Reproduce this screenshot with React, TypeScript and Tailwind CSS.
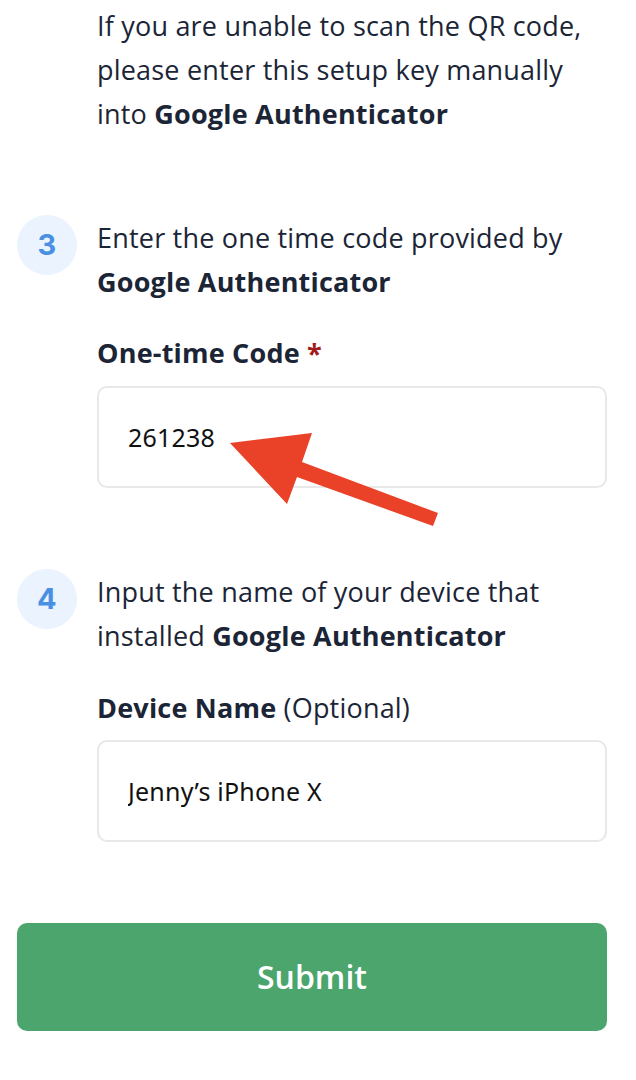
import React from "react";

function StepBadge({ n }: { n?: number }) {
  if (!n) return <div className="w-[60px] shrink-0" />;
  return (
    <div className="w-[60px] h-[60px] shrink-0 rounded-full bg-[#eaf3fe] flex items-center justify-center text-[#4a90e2] text-[29px] font-bold font-['Inter',sans-serif] -mt-px">
      {n}
    </div>
  );
}

function Field({ value }: { value: string }) {
  return (
    <input
      readOnly
      defaultValue={value}
      className="w-full h-[102px] rounded-[10px] border-2 border-[#e8e8e8] bg-white pl-[29px] text-[25px] text-[#111] font-['Noto_Sans',sans-serif] outline-none"
    />
  );
}

export default function App() {
  return (
    <div className="bg-white min-h-[1080px] w-[636px] font-['Open_Sans',sans-serif] text-[#1b2536] text-[27px] tracking-[0.2px] leading-[44px] pl-[17px] pr-[29px] pt-[4px]">
      {/* step 2 tail */}
      <div className="flex gap-5">
        <StepBadge />
        <p>
          If you are unable to scan the QR code, please enter this setup key
          manually into <b className="font-bold whitespace-nowrap">Google Authenticator</b>
        </p>
      </div>

      {/* step 3 */}
      <div className="flex gap-5 mt-[80px]">
        <StepBadge n={3} />
        <div className="flex-1">
          <p>
            Enter the one time code provided by{" "}
            <b className="font-bold whitespace-nowrap">Google Authenticator</b>
          </p>
          <div className="mt-[27px] mb-[11px] font-bold">
            One-time Code <span className="text-[#a01c1c]">*</span>
          </div>
          <div className="relative">
            <Field value="261238" />
            <svg
              className="absolute left-0 top-0 pointer-events-none"
              width="360"
              height="150"
              viewBox="0 0 360 150"
            >
              <polygon
                points="133,57 215,47 205,76 341,127 336,140 200,91 190,118"
                fill="#ea4228"
              />
            </svg>
          </div>
        </div>
      </div>

      {/* step 4 */}
      <div className="flex gap-5 mt-[82px]">
        <StepBadge n={4} />
        <div className="flex-1">
          <p>
            Input the name of your device that installed{" "}
            <b className="font-bold whitespace-nowrap">Google Authenticator</b>
          </p>
          <div className="mt-[28px] mb-[10px]">
            <b className="font-bold">Device Name</b> (Optional)
          </div>
          <Field value="Jenny’s iPhone X" />
        </div>
      </div>

      <button className="mt-[81px] w-full h-[108px] rounded-[10px] bg-[#4ba56c] text-white text-[32px] font-semibold tracking-normal">
        Submit
      </button>
    </div>
  );
}
